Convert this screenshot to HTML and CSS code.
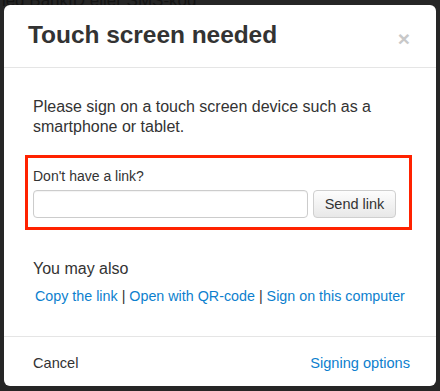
FILE: index.html
```html
<!DOCTYPE html>
<html>
<head>
<meta charset="utf-8">
<link rel="stylesheet" href="styles.css">
</head>
<body>
<div class="backdrop">
  <div class="behind">
    <p class="behind-line top">Legitimera dig med BankID eller SMS-kod</p>
  </div>
  <div class="modal">
    <div class="modal-header">
      <h1 class="modal-title">Touch screen needed</h1>
      <span class="close">×</span>
    </div>
    <div class="modal-body">
      <p class="intro">Please sign on a touch screen device such as a smartphone or tablet.</p>
      <div class="highlight">
        <label class="field-label">Don't have a link?</label>
        <div class="form-row">
          <input class="text-input" type="text">
          <button class="btn">Send link</button>
        </div>
      </div>
      <p class="also">You may also</p>
      <p class="links"><a class="link">Copy the link</a> <span class="sep">|</span> <a class="link">Open with QR-code</a> <span class="sep">|</span> <a class="link">Sign on this computer</a></p>
    </div>
    <div class="modal-footer">
      <a class="cancel">Cancel</a>
      <a class="link options">Signing options</a>
    </div>
  </div>
</div>
</body>
</html>
```
FILE: styles.css
```css
* { box-sizing: border-box; }
html, body { margin: 0; padding: 0; }
body {
  width: 440px;
  height: 391px;
  overflow: hidden;
  background: #262626;
  font-family: "Liberation Sans", Arial, Helvetica, sans-serif;
  color: #333;
}
.backdrop {
  position: relative;
  width: 440px;
  height: 391px;
  padding: 5px 4px 0 4px;
}
.behind {
  position: absolute;
  left: 0;
  top: 0;
  width: 440px;
}
.behind-line {
  margin: 0;
  font-size: 17px;
  color: #141414;
  position: absolute;
  left: -120px;
  top: -9px;
}
.modal {
  position: relative;
  width: 432px;
  height: 381px;
  background: #fff;
  border-radius: 6px;
  display: flex;
  flex-direction: column;
}
.modal-header {
  height: 63px;
  border-bottom: 1px solid #e5e5e5;
  display: flex;
  align-items: center;
  justify-content: space-between;
  padding: 0 26px 3px 24px;
}
.modal-title {
  margin: 0;
  font-size: 24.5px;
  font-weight: bold;
  color: #333;
  letter-spacing: -0.05px;
}
.close {
  font-size: 21px;
  font-weight: bold;
  color: #c8c8c8;
  line-height: 1;
  padding-top: 8px;
}
.modal-body {
  padding: 29px 29px 0 29px;
  flex: 1;
}
.intro {
  margin: 0;
  font-size: 16px;
  line-height: 20px;
  color: #333;
}
.highlight {
  margin: 18px -5px 0 -8px;
  border: 3px solid #ff2200;
  padding: 9px 5px 8px 5px;
  height: 75px;
}
.field-label {
  display: block;
  font-size: 14px;
  line-height: 18px;
  color: #333;
}
.form-row {
  display: flex;
  gap: 5px;
  margin-top: 5px;
}
.text-input {
  width: 275px;
  height: 28px;
  border: 1px solid #ccc;
  border-radius: 4px;
  padding: 0 6px;
  margin: 0;
  background: #fff;
  box-shadow: inset 0 1px 1px rgba(0,0,0,0.05);
}
.btn {
  width: 83px;
  height: 28px;
  margin: 0;
  border: 1px solid #cfcfcf;
  border-radius: 4px;
  background: linear-gradient(#fdfdfd, #e8e8e8);
  font-family: "Liberation Sans", Arial, sans-serif;
  font-size: 14.5px;
  color: #333;
  padding: 0;
}
.also {
  margin: 29px 0 0 0;
  font-size: 16px;
  line-height: 20px;
  color: #333;
}
.links {
  margin: 7px 0 0 2px;
  font-size: 14.3px;
  line-height: 20px;
  color: #333;
}
.link {
  color: #0d7fce;
  text-decoration: none;
}
.sep { color: #333; }
.modal-footer {
  height: 50px;
  border-top: 1px solid #e5e5e5;
  display: flex;
  align-items: center;
  justify-content: space-between;
  padding: 2px 26px 0 29px;
  font-size: 14.6px;
}
.cancel { color: #333; }
```
